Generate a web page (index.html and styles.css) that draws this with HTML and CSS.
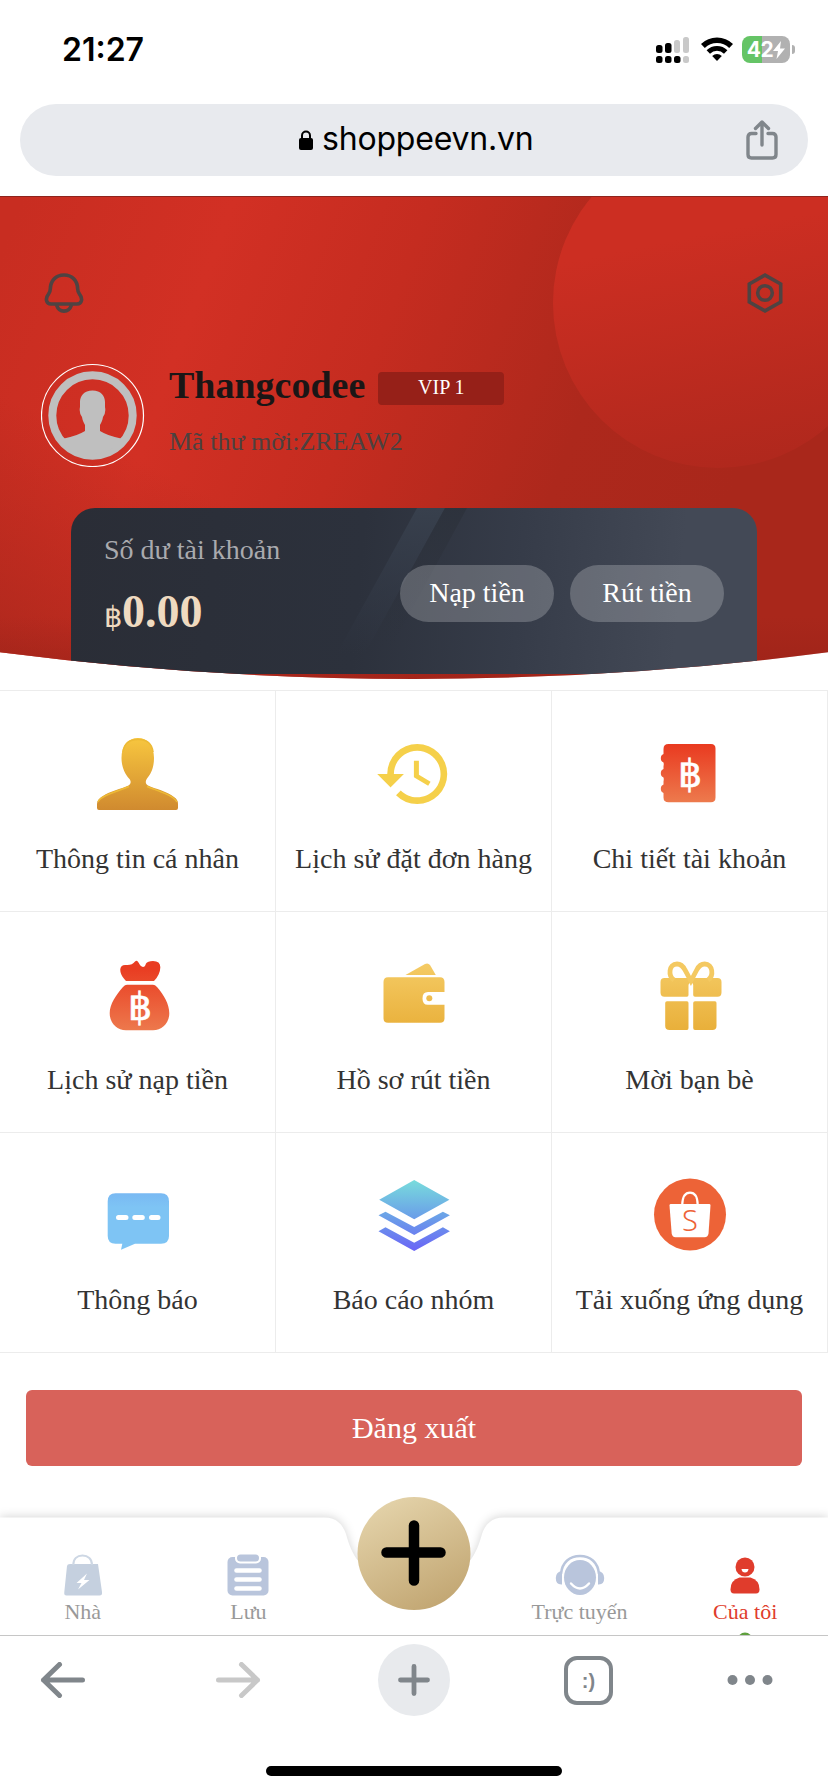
FILE: index.html
```html
<!DOCTYPE html>
<html lang="vi">
<head>
<meta charset="utf-8">
<title>shoppeevn.vn</title>
<link rel="stylesheet" href="styles.css">
</head>
<body>
<div class="phone">
  <header class="status">
    <span class="time">21:27</span>
    <div class="indicators">
      <svg class="signal" viewBox="0 0 34 27" width="34" height="27">
        <g fill="#c9c9c9"><rect x="18" y="4" width="6" height="13" rx="2.5"/><rect x="27" y="1" width="6" height="16" rx="2.5"/><rect x="27" y="20" width="6" height="7" rx="2.5"/></g>
        <g><rect x="0" y="9" width="6.5" height="8" rx="2.5"/><rect x="9" y="7" width="6.5" height="10" rx="2.5"/><rect x="0" y="20" width="6.5" height="7" rx="2.5"/><rect x="9" y="20" width="6.5" height="7" rx="2.5"/><rect x="18" y="20" width="6.5" height="7" rx="2.5"/></g>
      </svg>
      <svg class="wifi" viewBox="0 0 32 24" width="32" height="24">
        <g fill="none" stroke="#000" stroke-width="5.4"><path d="M1.900 9a20 20 0 0 1 28.200 0"/><path d="M7.300 15a12.300 12.300 0 0 1 17.400 0" stroke-width="4.800"/></g>
        <path d="M16 24l-4.800-5a7 7 0 0 1 9.600 0z"/>
      </svg>
      <div class="battery"><span>42</span><svg viewBox="0 0 12 18" width="12" height="18"><path d="M8 0L0 10h5L3.500 18 12 7.500H7z" fill="#fff"/></svg></div>
    </div>
  </header>

  <div class="urlbar">
    <div class="site">
      <svg viewBox="0 0 14 20" width="14" height="20"><rect y="8" width="14" height="12" rx="2"/><path d="M3 9V5.500a4 4 0 0 1 8 0V9" fill="none" stroke="#000" stroke-width="2"/></svg>
      <span>shoppeevn.vn</span>
    </div>
    <svg class="share" viewBox="0 0 32 40" width="32" height="40" fill="none" stroke="#80868b" stroke-width="3.400" stroke-linecap="round" stroke-linejoin="round"><path d="M10 13.500H5.500Q2 13.500 2 17V34.500Q2 38 5.500 38H26.500Q30 38 30 34.500V17Q30 13.500 26.500 13.500H22M16 25V2.500M9.500 8.500L16 2l6.500 6.500"/></svg>
  </div>

  <section class="hero">
    <svg class="hero-bg" viewBox="0 0 828 494" width="828" height="494">
      <defs>
        <linearGradient id="red" gradientUnits="userSpaceOnUse" x1="0" y1="60" x2="720" y2="330">
          <stop offset="0" stop-color="#c82d21"/><stop offset=".26" stop-color="#d23024"/><stop offset=".5" stop-color="#c52c20"/><stop offset=".78" stop-color="#ad281c"/><stop offset="1" stop-color="#a9271b"/>
        </linearGradient>
        <linearGradient id="orb" x1=".35" y1="0" x2=".55" y2="1"><stop offset=".3" stop-color="#cc2e22"/><stop offset="1" stop-color="#b0281d"/></linearGradient>
        <linearGradient id="corner" gradientUnits="userSpaceOnUse" x1="110" y1="250" x2="0" y2="480"><stop offset="0" stop-color="#a5261b" stop-opacity="0"/><stop offset="1" stop-color="#a5261b" stop-opacity=".8"/></linearGradient>
        <linearGradient id="shade" x1="0" y1="0" x2="0" y2="1"><stop offset="0" stop-color="#8f1f16" stop-opacity="0"/><stop offset="1" stop-color="#8f1f16" stop-opacity=".45"/></linearGradient>
      </defs>
      <rect width="828" height="494" fill="url(#red)"/>
      <circle cx="718" cy="107" r="165" fill="url(#orb)"/>
      <rect width="400" height="494" fill="url(#corner)"/>
      <rect y="420" width="828" height="65" fill="url(#shade)"/>
      <rect width="828" height="1" fill="#8e241d"/>
    </svg>
    <div class="hero-content">
      <div class="hero-actions">
        <svg viewBox="0 0 40 40" width="40" height="40" fill="none" stroke="#4f4342" stroke-width="3.600"><path d="M20 2C11.500 2 6.500 8 6.300 16Q6.200 19 4.500 21.200C1 25.500 2 31 7 31H33C38 31 39 25.500 35.500 21.200Q33.800 19 33.700 16C33.500 8 28.500 2 20 2Z"/><path d="M12.500 32Q14.500 38.100 20 38.100T27.500 32"/></svg>
        <svg viewBox="0 0 36 40" width="36" height="40" fill="none" stroke="#4f4342" stroke-width="3.600"><path d="M18 2.100L33.700 11V29L18 37.900 2.300 29V11Z"/><circle cx="18" cy="20" r="7.300"/></svg>
      </div>
      <div class="profile">
        <svg viewBox="0 0 104 104" width="104" height="104">
          <circle cx="51.500" cy="52.500" r="51" fill="none" stroke="#fff" stroke-width="1.200"/>
          <circle cx="51.500" cy="52.500" r="40.200" fill="none" stroke="#bfbfbf" stroke-width="8"/>
          <path d="M51.500 27.500C43 27.500 39 33 39 39V44Q37.800 50 41 54C41.600 58 43 60 44 62V68Q36 73 23 75.500L25 81A40 40 0 0 0 78 81L80 75.500Q67 73 59 68V62C60 60 61.400 58 62 54Q65.200 50 64 44V39C64 33 60 27.500 51.500 27.500Z" fill="#bfbfbf"/>
        </svg>
        <div class="profile-text">
          <div class="name-row"><h1>Thangcodee</h1><span class="vip">VIP 1</span></div>
          <p class="code">Mã thư mời:ZREAW2</p>
        </div>
      </div>
      <div class="card">
        <svg class="card-bg" viewBox="0 0 686 166" width="686" height="166">
          <defs>
            <linearGradient id="s1" x1="0" y1="0" x2="0" y2="1"><stop offset="0" stop-color="#38404d"/><stop offset="1" stop-color="#333a48" stop-opacity="0"/></linearGradient>
            <linearGradient id="s2" x1="0" y1="0" x2="0" y2="1"><stop offset="0" stop-color="#2d323c" stop-opacity=".9"/><stop offset="1" stop-color="#2d323c" stop-opacity="0"/></linearGradient>
          </defs>
          <path d="M346 0H374L293 147H265Z" fill="url(#s1)"/><path d="M374 0H396L320 140H297Z" fill="url(#s2)"/>
        </svg>
        <div class="balance">
          <p class="balance-label">Số dư tài khoản</p>
          <p class="amount"><span class="currency">฿</span>0.00</p>
        </div>
        <div class="card-buttons"><button>Nạp tiền</button><button>Rút tiền</button></div>
      </div>
    </div>
  </section>

  <main class="menu">
    <svg class="defs" width="0" height="0"><defs>
      <linearGradient id="bronze" x1="0" y1="0" x2="0" y2="1"><stop offset="0" stop-color="#f7c63f"/><stop offset="1" stop-color="#d08a2f"/></linearGradient>
      <linearGradient id="orange" x1="0" y1="0" x2="0" y2="1"><stop offset="0" stop-color="#e93a20"/><stop offset="1" stop-color="#ed7a4d"/></linearGradient>
      <linearGradient id="gold" gradientUnits="userSpaceOnUse" x1="0" y1="12" x2="0" y2="80"><stop offset="0" stop-color="#f5cc66"/><stop offset="1" stop-color="#e9b03b"/></linearGradient>
      <linearGradient id="bag" gradientUnits="userSpaceOnUse" x1="0" y1="20" x2="0" y2="81"><stop offset="0" stop-color="#e93d22"/><stop offset="1" stop-color="#ed784c"/></linearGradient>
      <linearGradient id="sky" x1="0" y1="0" x2="0" y2="1"><stop offset="0" stop-color="#79b9f3"/><stop offset=".25" stop-color="#7ec4f4"/></linearGradient>
      <linearGradient id="stack" gradientUnits="userSpaceOnUse" x1="0" y1="10" x2="0" y2="81"><stop offset="0" stop-color="#78dcdc"/><stop offset=".5" stop-color="#6ba2e8"/><stop offset="1" stop-color="#6a64f6"/></linearGradient>
    </defs></svg>
    <a class="cell">
      <svg viewBox="0 0 90 90"><path d="M45 10C55 10 61 18 61 30C61 41 57 47 54 50.500C52 53.500 52.500 56 55 57.500C62 61 74 63 81 69C84 71 85 73 85 76V80Q85 82 83 82H6Q4 82 4 80V76C4 73 6 70 10 68C17 63 28 61 35.500 57.500C38 56 38.500 53 36 50.500C32 46 28.500 39 28.500 30C28.500 18 35 10 45 10Z" fill="url(#bronze)"/><path d="M5 74C6 71 9 69.500 12 68C20 64 28 62 36 58.500M54 58.500C62 62 71 64 79 69Q83 72 84 74M30 24C31 15 37 11.500 45 11.500S59 15 60 24" fill="none" stroke="#edba35" stroke-width="1.500"/></svg>
      <span>Thông tin cá nhân</span>
    </a>
    <a class="cell">
      <svg viewBox="0 0 90 90"><path transform="translate(4.900 6) scale(3.333)" fill="#f5d04a" d="M13 3a9 9 0 0 0-9 9H1l3.890 3.890.070.140L9 12H6c0-3.870 3.130-7 7-7s7 3.130 7 7-3.130 7-7 7c-1.930 0-3.680-.790-4.940-2.060l-1.420 1.420A8.954 8.954 0 0 0 13 21a9 9 0 0 0 0-18zm-1 5v5l4.280 2.540.720-1.210-3.500-2.080V8H12z"/></svg>
      <span>Lịch sử đặt đơn hàng</span>
    </a>
    <a class="cell">
      <svg viewBox="0 0 90 90"><path d="M23.500 16H66Q70.500 16 70.500 20.500V69.500Q70.500 74.300 66 74.300H23.500Q18.500 74.300 18.500 69.500V65A4 4.500 0 0 1 18.500 56.500V53.500Q19 51 18.500 49.500A4 4.500 0 0 1 18.500 41V38Q19 36 18.500 34.500A4 4.500 0 0 1 18.500 26V21Q18.500 16 23.500 16Z" fill="url(#orange)"/><text class="baht" x="45" y="58.500">฿</text></svg>
      <span>Chi tiết tài khoản</span>
    </a>
    <a class="cell">
      <svg viewBox="0 0 90 90"><path d="M33 32C30 28.500 27 25 27.300 20Q28 15.500 33 16Q39 16.500 42 12.500Q44 10.500 45.500 13.500Q47.500 17.500 50 18Q52 18 53 14.500Q54.500 12 60 12Q67.300 12 67.300 18C67.500 23 65 28 61 32ZM34 35.700H60Q62 35.700 64 38C71 46 76.300 55 76.300 64.300C76.300 74 69 81.300 60 81.300H33C24 81.300 16.700 74 16.700 64.300C16.700 55 23 46 30 38Q32 35.700 34 35.700Z" fill="url(#bag)"/><text class="baht" x="47" y="70.500">฿</text></svg>
      <span>Lịch sử nạp tiền</span>
    </a>
    <a class="cell">
      <svg viewBox="0 0 90 90" fill="url(#gold)"><path d="M36.500 26L56 15Q59 13.500 61 16L66.800 26Z"/><path d="M19 28.300H71Q75.500 28.300 75.500 33V43H59Q53.500 43 53.500 49.400T59 55.700H75.500V69.500Q75.500 73.700 71 73.700H19Q14.500 73.700 14.500 69.500V33Q14.500 28.300 19 28.300Z"/><circle cx="60.300" cy="49.300" r="3"/></svg>
      <span>Hồ sơ rút tiền</span>
    </a>
    <a class="cell">
      <svg viewBox="0 0 90 90"><g fill="url(#gold)"><path d="M19.500 29H72.500Q76.500 29 76.500 33V43.500Q76.500 47.700 72.500 47.700H50Q48.200 47.700 48.200 46V36Q48.200 33.700 45.900 33.700T43.500 36V46Q43.500 47.700 42 47.700H19.500Q15.500 47.700 15.500 43.500V33Q15.500 29 19.500 29Z"/><path d="M22 52.300H42Q43.500 52.300 43.500 54V79Q43.500 81 42 81H24.500Q20.200 81 20.200 77V54Q20.200 52.300 22 52.300ZM50 52.300H70Q71.500 52.300 71.500 54V77Q71.500 81 67.500 81H50Q48.200 81 48.200 79V54Q48.200 52.300 50 52.300Z"/></g><path d="M29 31C23 27 23.500 15 32 15C36 15 38 17 40 21L45.900 32L51.700 21C53.700 17 55.700 15 59.700 15C68 15 69 27 63 31" fill="none" stroke="#f4c961" stroke-width="4.800"/></svg>
      <span>Mời bạn bè</span>
    </a>
    <a class="cell">
      <svg viewBox="0 0 90 90"><path d="M22.500 23.300H68Q76 23.300 76 31.500V66Q76 73.700 68 73.700H42L28 79.700L29.300 73.700H22.500Q14.700 73.700 14.700 66V31.500Q14.700 23.300 22.500 23.300Z" fill="url(#sky)"/><path d="M25.500 47.500H33M41.800 47.500H49.300M58.500 47.500H65" stroke="#fff" stroke-width="5" stroke-linecap="round"/></svg>
      <span>Thông báo</span>
    </a>
    <a class="cell">
      <svg viewBox="0 0 90 90" fill="url(#stack)"><path d="M10.200 29.700L45.200 10 80.400 29.700 45.200 49.200ZM9.500 45.300L16.500 41.700 45.200 57 73.900 41.700 80.900 45.300 45.200 65ZM9.500 61.300L16.500 57.300 45.200 72.700 73.900 57.300 80.900 61.300 45.200 81Z"/></svg>
      <span>Báo cáo nhóm</span>
    </a>
    <a class="cell">
      <svg viewBox="0 0 90 90"><circle cx="45" cy="44.600" r="36" fill="#ed6337"/><path d="M25.500 34H64.500Q65.600 34 65.500 35.500L63.500 63.500Q63 67.200 59.500 67.200H30.500Q27.200 67.200 26.700 63.500L24.500 35.500Q24.400 34 25.500 34Z" fill="#fff"/><path d="M37.200 35C37.500 27 40 22.700 45 22.700S52.500 27 52.700 35" fill="none" stroke="#fff" stroke-width="2.200"/><text class="shop-letter" x="45" y="60.700">S</text></svg>
      <span>Tải xuống ứng dụng</span>
    </a>
  </main>

  <button class="logout">Đăng xuất</button>

  <nav class="tabs">
    <svg class="tabs-bg" viewBox="0 0 828 138" width="828" height="138">
      <defs><linearGradient id="coin" x1=".25" y1="0" x2=".75" y2="1"><stop offset="0" stop-color="#e4d3aa"/><stop offset="1" stop-color="#c1a571"/></linearGradient></defs>
      <path class="tabs-shape" d="M0 20.500H324C337 20.500 343 28 346 37C349 48 352 56 359 65Q414 110 469 65C476 56 479 48 482 37C485 28 491 20.500 504 20.500H828V170H0Z"/>
      <circle cx="414" cy="56.500" r="56.500" fill="url(#coin)"/>
      <path d="M414 28.500V83.500M386.500 55.500H440.500" stroke="#000" stroke-width="10.500" stroke-linecap="round"/>
      <circle cx="745" cy="143" r="7.500" fill="#5fa03e"/>
    </svg>
    <a class="tab">
      <svg viewBox="0 0 50 42" width="50" height="42"><path d="M10 10H40L44 38Q44.500 41.500 41.500 41.500H8.500Q5.800 41.500 6.300 38L9 12Q9.200 10 12 10Z" fill="#c5d0df"/><path d="M15.300 11C15.300 5 19 1.500 24.500 1.500S34 5 34 11" fill="none" stroke="#cdd7e4" stroke-width="2"/><path d="M29 19.500L18.500 29H23.500L20 35.500L31.500 26H26Z" fill="#fff"/></svg>
      <span>Nhà</span>
    </a>
    <a class="tab">
      <svg viewBox="0 0 50 42" width="50" height="42"><rect x="4.500" y="3" width="41" height="38.500" rx="5" fill="#b9c5dc"/><rect x="12" y="-1.500" width="26" height="11" rx="5" fill="#fff"/><rect x="14" y=".5" width="22" height="7" rx="3.500" fill="#b9c5dc"/><path d="M13.500 16.500H36.500M13.500 25.500H36.500M13.500 34.500H36.500" stroke="#fff" stroke-width="4.600" stroke-linecap="round"/></svg>
      <span>Lưu</span>
    </a>
    <div class="tab"></div>
    <a class="tab">
      <svg viewBox="0 0 50 42" width="50" height="42"><ellipse cx="25" cy="23.500" rx="16" ry="17.500" fill="#b9c5dc"/><path d="M6 20C7 8 15 2 25 2S43 8 44 20" fill="none" stroke="#b9c5dc" stroke-width="2.500"/><path d="M7 17V30.500Q.8 31 .8 24Q.8 18 7 17ZM43 17V30.500Q49.200 31 49.200 24Q49.200 18 43 17Z" fill="#b9c5dc"/><path d="M16 29.500Q25 39.500 34 29.500" fill="none" stroke="#fff" stroke-width="2.400" stroke-linecap="round"/></svg>
      <span>Trực tuyến</span>
    </a>
    <a class="tab active">
      <svg viewBox="0 0 50 42" width="50" height="42"><circle cx="25" cy="13" r="9.500" fill="#e03c2c"/><path d="M19.500 23.500H30.500Q39.500 26 39.500 35.500Q39.500 39.500 36 39.500H14Q10.500 39.500 10.500 35.500Q10.500 26 19.500 23.500Z" fill="#e03c2c"/><path d="M21.500 15H28.500Q28 18.500 25 18.500T21.500 15Z" fill="#fff"/></svg>
      <span>Của tôi</span>
    </a>
  </nav>

  <footer class="browser-bar">
    <div class="controls">
      <svg viewBox="0 0 46 36" width="46" height="36" fill="none" stroke="#80868b" stroke-width="5" stroke-linecap="round" stroke-linejoin="round"><path d="M42.500 18H3.500M19.500 2.500L3.500 18l16 15.500"/></svg>
      <svg viewBox="0 0 46 36" width="46" height="36" fill="none" stroke="#c8c8c8" stroke-width="5" stroke-linecap="round" stroke-linejoin="round"><path d="M3.500 18H42.500M26.500 2.500L42.500 18 26.500 33.500"/></svg>
      <svg viewBox="0 0 72 72" width="72" height="72"><circle cx="36" cy="36" r="36" fill="#e8eaed"/><path d="M36 22.500V49.500M22.500 36H49.500" stroke="#80868b" stroke-width="4.800" stroke-linecap="round"/></svg>
      <div class="tab-count">:)</div>
      <svg viewBox="0 0 46 12" width="46" height="12" fill="#80868b"><circle cx="5.500" cy="6" r="5"/><circle cx="23" cy="6" r="5"/><circle cx="40.500" cy="6" r="5"/></svg>
    </div>
    <div class="home-indicator"></div>
  </footer>
</div>
</body>
</html>
```
FILE: styles.css
```css
* { box-sizing: border-box; }
body { margin: 0; background: #fff; font-family: "Liberation Serif", serif; color: #333; }
h1, p { margin: 0; }
button { border: 0; padding: 0; font-family: inherit; color: #fff; }
svg { display: block; flex: none; }
.phone { width: 828px; height: 1792px; overflow: hidden; display: flex; flex-direction: column; }

.status { height: 104px; padding: 30px 38px 0 62px; display: flex; justify-content: space-between; align-items: flex-start; }
.time { font: 600 32px/40px Inter, sans-serif; color: #000; }
.indicators { display: flex; padding-top: 6px; }
.wifi { margin: 1px 9px 0 11px; }
.battery { position: relative; width: 48px; height: 27px; border-radius: 8px; background: linear-gradient(90deg, #65c466 20px, #b1b1b1 20px); display: flex; align-items: center; justify-content: center; font: 700 21px/27px Inter, sans-serif; color: #fff; letter-spacing: -.5px; }
.battery::after { content: ""; position: absolute; right: -5px; top: 9px; width: 3px; height: 9px; border-radius: 0 3px 3px 0; background: #b1b1b1; }

.urlbar { width: 788px; height: 72px; margin: 0 20px 20px; border-radius: 36px; background: #e8eaee; display: flex; align-items: center; justify-content: flex-end; padding-right: 30px; }
.site { flex: 1; display: flex; align-items: center; gap: 9px; padding-left: 279px; font: 400 32px/40px Inter, sans-serif; letter-spacing: -.2px; color: #000; }
.site span { padding-bottom: 2px; }

.hero { position: relative; flex: none; height: 494px; clip-path: path("M0 0H828V456.300Q414 509.700 0 456.300Z"); }
.hero-bg, .hero-content { position: absolute; left: 0; top: 0; }
.hero-content { width: 828px; }
.hero-actions { display: flex; justify-content: space-between; padding: 77px 45px 0 44px; }
.profile { display: flex; gap: 24px; padding: 50px 0 0 41px; }
.name-row { display: flex; gap: 13px; }
.name-row h1 { font-size: 38px; line-height: 44px; color: #1a1616; }
.vip { width: 126px; height: 33px; margin-top: 9px; border-radius: 4px; background: #962018; color: #fff; font-size: 20px; line-height: 31px; text-align: center; }
.code { margin-top: 19px; font-size: 26px; line-height: 32px; color: #4c4140; }
.card { position: relative; width: 686px; height: 166px; margin: 41px 71px 0; padding: 0 33px; border-radius: 24px 24px 0 0; overflow: hidden; display: flex; justify-content: space-between; background: linear-gradient(95deg, #2a2d36, #2c313c 42%, #363c49 65%, #434956 88%); }
.card-bg { position: absolute; left: 0; top: 0; }
.balance, .card-buttons { position: relative; }
.balance-label { margin-top: 26px; font-size: 28px; line-height: 32px; color: #a9aaae; }
.amount { margin-top: 19px; font-weight: 700; font-size: 46px; line-height: 54px; color: #efdac0; }
.currency { font: 400 29px/1 "Noto Sans", sans-serif; }
.card-buttons { display: flex; gap: 16px; padding-top: 57px; }
.card-buttons button { width: 154px; height: 57px; padding-bottom: 2px; border-radius: 29px; background: rgba(255, 255, 255, .22); font-size: 28px; }

.menu { flex: none; display: grid; grid-template-columns: repeat(3, 276px); grid-template-rows: 221px 221px 220px; border-top: 1px solid #ececec; }
.defs { position: absolute; }
.cell { display: flex; flex-direction: column; align-items: center; padding-top: 37px; border-right: 1px solid #ececec; border-bottom: 1px solid #ececec; }
.cell svg { width: 90px; height: 90px; }
.cell span { margin-top: 25px; font-size: 28px; line-height: 32px; white-space: nowrap; }
.cell:nth-last-child(-n+3) span { margin-top: 24px; }
.baht { font: 400 38px "Noto Sans", sans-serif; fill: #fff; stroke: #fff; stroke-width: .6px; text-anchor: middle; }
.shop-letter { font: 300 29px "Noto Sans", sans-serif; fill: #ed6337; text-anchor: middle; }

.logout { flex: none; height: 76px; margin: 37px 26px 31px; border-radius: 6px; background: #d8625a; font-size: 30px; }

.tabs { position: relative; flex: none; height: 138px; overflow-y: clip; display: grid; grid-template-columns: repeat(5, 1fr); }
.tabs-bg { position: absolute; left: 0; top: 0; }
.tabs-shape { fill: #fff; filter: drop-shadow(0 -1px 5px rgba(0, 0, 0, .16)); }
.tab { position: relative; display: flex; flex-direction: column; align-items: center; padding-top: 57px; color: #999; font-size: 22px; line-height: 26px; }
.tab span { margin-top: 3px; }
.tab.active { color: #e03c2c; }

.browser-bar { flex: none; height: 157px; border-top: 1px solid #c6c6c6; background: #fff; }
.controls { height: 88px; padding: 0 55px 0 40px; display: grid; grid-template-columns: 175px 163px 185px 164px 46px; align-items: center; }
.tab-count { width: 49px; height: 49px; margin-left: 1px; border: 4px solid #80868b; border-radius: 13px; font: 700 20px/43px "Liberation Sans", sans-serif; color: #80868b; text-align: center; }
.home-indicator { width: 296px; height: 10px; margin: 42px auto 0; border-radius: 5px; background: #000; }
```
